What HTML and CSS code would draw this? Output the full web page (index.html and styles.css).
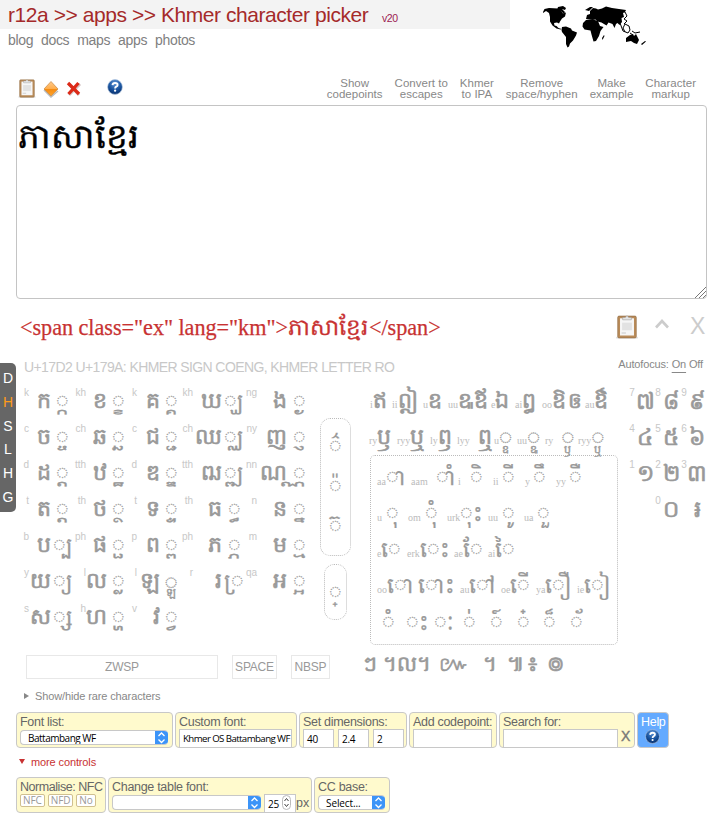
FILE: index.html
```
<!DOCTYPE html>
<html lang="en">
<head>
<meta charset="utf-8">
<title>Khmer character picker</title>
<link rel="stylesheet" href="styles.css">
</head>
<body>
<svg width="0" height="0" class="defs" aria-hidden="true">
  <defs>
    <linearGradient id="gold" x1="0" y1="0" x2="0" y2="1"><stop offset="0" stop-color="#ffc98a"/><stop offset=".5" stop-color="#ffae4c"/><stop offset=".52" stop-color="#f58a10"/><stop offset="1" stop-color="#ffa52e"/></linearGradient>
    <radialGradient id="ball" cx=".5" cy=".25" r=".75"><stop offset="0" stop-color="#5c93d6"/><stop offset=".6" stop-color="#17519c"/><stop offset="1" stop-color="#082f6c"/></radialGradient>
    <symbol id="clip" viewBox="0 0 20 22"><rect x="0" y="20" width="20" height="1.6" rx=".8" fill="#ddd"/><rect x="1.500" y="1" width="17" height="20" rx="1.2" fill="#b98b59" stroke="#906b43" stroke-width=".6"/><rect x="3.600" y="3" width="12.800" height="15.8" fill="#f6f6f6"/><path d="M5.5 7h9v7h-9z" fill="#e2e2e2"/><path d="M5 16.5h4" stroke="#ccc"/><path d="M6 4.4V2.2h2.5Q10-.6 11.500 2.200H14v2.200z" fill="#e4e4e4" stroke="#999" stroke-width=".5"/></symbol>
    <symbol id="help" viewBox="0 0 16 16"><circle cx="8" cy="8" r="7.400" fill="url(#ball)" stroke="#b8cbe3" stroke-width=".7"/><path d="M5.500 6.200Q5.700 4 8.100 4q2.500 0 2.500 1.900 0 1.100-1.400 1.800Q8.100 8.300 8.100 9.500" fill="none" stroke="#fff" stroke-width="1.900"/><circle cx="8.100" cy="11.700" r="1.150" fill="#fff"/></symbol>
  </defs>
</svg>

<header class="top">
  <div class="title"><span class="crumbs">r12a &gt;&gt; apps &gt;&gt; Khmer character picker</span><span class="version">v20</span></div>
  <svg class="map" viewBox="0 0 104 44" width="104" height="44">
    <path d="M0 6l1.500-3L6 2l9 .5 3 2 2 3 3-1-1 4-3 2-2 3-1 2-2-1-3 .5.500 2.500 2 .5 2 2 3 1-1 .5-4-1-4-3-2.500-4L7 11l-1-4-3-2-3 2z"/>
    <path d="M15 1l5-1 3 2-1 2-3-1 3 3-1 2-3-3-4-1z"/>
    <path d="M19 21l4-.5 5 2 1 2 5 2-1 3-3 5-3 3-1 3-1.500 1L23 38l0-7-4-5-.5-2z"/>
    <path d="M40 17l3-3 7-.5 5 1.500 2 5 3.500 1-3 4-1.500 5-3 5-2.500.5-2-7-1-4-6-1-2-3z"/>
    <path d="M43 13l1-4 3-1 0-3 3-3 3 .5 2 1 4-1 4-2 6 1.500 7 1 7 1-1 2-2 1 1 4-2.500 1 .5 4-2.500 3-2-2-1.500 1-1.500 4-2-4-4-1.500-2 3-5-3-4-1-2-2-3 .5z"/>
    <path d="M42 4l5-3 3 0-4 4zM59 32l2-3 .5 1-2 4z"/>
    <path d="M78 5l4 1 2 4-3 3 3 2-3 3M77 17l3 8 5 2 2-3-1-4-4-2-2 4 2 4M89 25l3 2 5-1M90 29l-3-2" fill="none" stroke="#000" stroke-width="1"/>
    <path d="M83 32l4-3 3-1 1 2 2-2 2 4 1 2-2 4-3-1-3-2-5 1zM98 38l4-3 1 .5-4 3.500z"/>
  </svg>
</header>
<nav class="links"><a>blog</a><a>docs</a><a>maps</a><a>apps</a><a>photos</a></nav>

<div class="toolbar">
  <div class="tools">
    <svg width="18" height="19"><use href="#clip"/></svg>
    <svg width="18" height="18" viewBox="0 0 18 18"><path d="M2 10l7 7 7-6" fill="none" stroke="#bbb" stroke-width="1.500"/><path d="M9 1.500L16 9l-7 7L2 9z" fill="url(#gold)" stroke="#c9863e" stroke-width=".7"/></svg>
    <svg width="16" height="17" viewBox="0 0 16 17"><path d="M3 4l10 11M14 4L3 15" stroke="#d5c5c5" stroke-width="3"/><path d="M2 3l11 11M12.500 3l-10 11" stroke="#dc2a18" stroke-width="3.300"/></svg>
    <svg class="help-sm" width="16" height="16"><use href="#help"/></svg>
  </div>
  <div class="actions">
    <span>Show<br>codepoints</span><span>Convert to<br>escapes</span><span>Khmer<br>to IPA</span><span>Remove<br>space/hyphen</span><span>Make<br>example</span><span>Character<br>markup</span>
  </div>
</div>

<main>
<div class="editor" lang="km">ភាសាខ្មែរ<svg class="grip" width="12" height="12"><path d="M1 12L12 1M5 12l7-7M9 12l3-3" stroke="#777" fill="none"/></svg></div>

<div class="markup">
  <div class="code">&lt;span class="ex" lang="km"&gt;<span class="km" lang="km">ភាសាខ្មែរ</span>&lt;/span&gt;</div>
  <div class="code-tools">
    <svg width="22" height="24"><use href="#clip"/></svg>
    <svg class="caret" width="14" height="10"><path d="M1 8.500L7 2l6 6.500" fill="none" stroke="#ccc" stroke-width="2.600"/></svg>
    <span class="close">X</span>
  </div>
</div>

<div class="info"><span class="name">U+17D2 U+179A: KHMER SIGN COENG, KHMER LETTER RO</span><span class="focus">Autofocus: <u>On</u> Off</span></div>

<section class="picker">
  <div class="left">
    <div class="cons" lang="km">
      <i>k</i><b>ក</b><s>◌្ក</s><i>kh</i><b>ខ</b><s>◌្ខ</s><i>k</i><b>គ</b><s>◌្គ</s><i>kh</i><b>ឃ</b><s>◌្ឃ</s><i>ng</i><b>ង</b><s>◌្ង</s>
      <i>c</i><b>ច</b><s>◌្ច</s><i>ch</i><b>ឆ</b><s>◌្ឆ</s><i>c</i><b>ជ</b><s>◌្ជ</s><i>ch</i><b>ឈ</b><s>◌្ឈ</s><i>ny</i><b>ញ</b><s>◌្ញ</s>
      <i>d</i><b>ដ</b><s>◌្ដ</s><i>tth</i><b>ឋ</b><s>◌្ឋ</s><i>d</i><b>ឌ</b><s>◌្ឌ</s><i>tth</i><b>ឍ</b><s>◌្ឍ</s><i>nn</i><b>ណ</b><s>◌្ណ</s>
      <i>t</i><b>ត</b><s>◌្ត</s><i>th</i><b>ថ</b><s>◌្ថ</s><i>t</i><b>ទ</b><s>◌្ទ</s><i>th</i><b>ធ</b><s>◌្ធ</s><i>n</i><b>ន</b><s>◌្ន</s>
      <i>b</i><b>ប</b><s>◌្ប</s><i>ph</i><b>ផ</b><s>◌្ផ</s><i>p</i><b>ព</b><s>◌្ព</s><i>ph</i><b>ភ</b><s>◌្ភ</s><i>m</i><b>ម</b><s>◌្ម</s>
      <i>y</i><b>យ</b><s>◌្យ</s><i>l</i><b>ល</b><s>◌្ល</s><i>l</i><b>ឡ</b><s class="stack">◌<small>ឡ</small></s><i>r</i><b>រ</b><s>◌្រ</s><i>qa</i><b>អ</b><s>◌្អ</s>
      <i>s</i><b>ស</b><s>◌្ស</s><i>h</i><b>ហ</b><s>◌្ហ</s><i>v</i><b>វ</b><s>◌្វ</s>
    </div>
    <div class="spaces"><span class="zwsp">ZWSP</span><span class="sp">SPACE</span><span class="nb">NBSP</span></div>
  </div>
  <div class="signs" lang="km">
    <div class="shifters"><s>◌៌</s><s>◌៉</s><s>◌៊</s></div>
    <div class="coeng"><s>◌្</s></div>
  </div>
  <div class="middle" lang="km">
    <div class="row ind1"><span><i>i</i>ឥ</span><span><i>ii</i>ឦ</span><span><i>u</i>ឧ</span><span><i>uu</i>ឩ</span><span>ឪ</span><span><i>e</i>ឯ</span><span><i>ai</i>ឰ</span><span><i>oo</i>ឱ</span><span>ឲ</span><span><i>au</i>ឳ</span></div>
    <div class="row ind2"><span><i>ry</i>ឫ</span><span><i>ryy</i>ឬ</span><span><i>ly</i>ឭ</span><span class="wide"><i>lyy</i>ឮ</span><span><i>u</i><s class="stack">◌<small>ឧ</small></s></span><span><i>uu</i><s class="stack">◌<small>ឩ</small></s></span><span class="wide"><i>ry</i><s class="stack">◌<small>ឫ</small></s></span><span><i>ryy</i><s class="stack">◌<small>ឬ</small></s></span></div>
    <div class="vowels">
      <div class="row v1"><span><i>aa</i><s>◌ា</s></span><span class="wide"><i>aam</i><s>◌ាំ</s></span><span class="far"><i>i</i><s>◌ិ</s></span><span><i>ii</i><s>◌ី</s></span><span><i>y</i><s>◌ឹ</s></span><span><i>yy</i><s>◌ឺ</s></span></div>
      <div class="row v2"><span><i>u</i><s>◌ុ</s></span><span><i>om</i><s>◌ុំ</s></span><span><i>urk</i><s>◌ុះ</s></span><span><i>uu</i><s>◌ូ</s></span><span><i>ua</i><s>◌ួ</s></span></div>
      <div class="row v3"><span><i>e</i><s>◌េ</s></span><span><i>erk</i><s>◌េះ</s></span><span><i>ae</i><s>◌ែ</s></span><span><i>ai</i><s>◌ៃ</s></span></div>
      <div class="row v4"><span><i>oo</i><s>◌ោ</s></span><span><s>◌ោះ</s></span><span><i>au</i><s>◌ៅ</s></span><span><i>oe</i><s>◌ើ</s></span><span><i>ya</i><s>◌ឿ</s></span><span><i>ie</i><s>◌ៀ</s></span></div>
      <div class="row v5"><s>◌ំ</s><s>◌ះ</s><s>◌ៈ</s><s>◌់</s><s>◌៍</s><s>◌៎</s><s>◌៏</s><s>◌័</s></div>
    </div>
    <div class="row punct"><span>ៗ</span><span>។ល។</span><span>៚</span><span>។</span><span>៕</span><span>៖</span><span>៙</span></div>
  </div>
  <div class="digits" lang="km">
    <i>7</i><b>៧</b><i>8</i><b>៨</b><i>9</i><b>៩</b>
    <i>4</i><b>៤</b><i>5</i><b>៥</b><i>6</i><b>៦</b>
    <i>1</i><b>១</b><i>2</i><b>២</b><i>3</i><b>៣</b>
    <i></i><b></b><i>0</i><b>០</b><i></i><b>៛</b>
  </div>
</section>

<div class="rare"><span class="tri-r"></span>Show/hide rare characters</div>

<div class="controls">
  <div class="panel p-font"><label>Font list:</label><div class="select"><span>Battambang WF</span><svg width="13" height="15"><path d="M3.500 6L6.500 3l3 3M3.500 9.500l3 3 3-3" fill="none" stroke="#fff" stroke-width="1.300"/></svg></div></div>
  <div class="panel p-custom"><label>Custom font:</label><div class="field">Khmer OS Battambang WF</div></div>
  <div class="panel p-dim"><label>Set dimensions:</label><div class="trio"><div class="field">40</div><div class="field">2.4</div><div class="field">2</div></div></div>
  <div class="panel p-add"><label>Add codepoint:</label><div class="field"></div></div>
  <div class="panel p-search"><label>Search for:</label><div class="duo"><div class="field"></div><span class="x">X</span></div></div>
  <div class="panel p-help"><label>Help</label><svg width="15" height="15"><use href="#help"/></svg></div>
</div>
<div class="more"><span class="tri-d"></span>more controls</div>
<div class="controls second">
  <div class="panel p-norm"><label>Normalise: NFC</label><div class="buttons"><span>NFC</span><span>NFD</span><span>No</span></div></div>
  <div class="panel p-table"><label>Change table font:</label><div class="duo"><div class="select"><span></span><svg width="13" height="15"><path d="M3.500 6L6.500 3l3 3M3.500 9.500l3 3 3-3" fill="none" stroke="#fff" stroke-width="1.300"/></svg></div><div class="field num">25<svg width="9" height="15"><rect x=".5" y=".5" width="8" height="14" rx="4" fill="#fff" stroke="#bbb"/><path d="M2.500 6l2-2.500 2 2.500M2.500 9l2 2.500 2-2.500" fill="none" stroke="#444"/></svg></div><span class="px">px</span></div></div>
  <div class="panel p-cc"><label>CC base:</label><div class="select"><span>Select...</span><svg width="13" height="15"><path d="M3.500 6L6.500 3l3 3M3.500 9.500l3 3 3-3" fill="none" stroke="#fff" stroke-width="1.300"/></svg></div></div>
</div>
</main>
<aside class="side"><span>D</span><span class="on">H</span><span>S</span><span>L</span><span>H</span><span>G</span></aside>
</body>
</html>
```
FILE: styles.css
```
* { box-sizing: border-box; }
body { margin: 0; width: 713px; height: 819px; overflow: hidden; position: relative; background: #fff; color: #888; font-family: "Liberation Sans", Arial, sans-serif; }
.defs { position: absolute; }
i, b, s { font-style: normal; font-weight: normal; text-decoration: none; }

.top { display: flex; height: 49px; margin-bottom: -16px; }
.title { width: 510px; height: 29px; padding-left: 8px; background: #f3f3f3; color: #a52a2a; display: flex; align-items: baseline; line-height: 29px; white-space: nowrap; }
.crumbs { font-size: 21px; letter-spacing: -.44px; width: 374px; }
.version { font-size: 10.500px; letter-spacing: -.4px; color: #9c2050; }
.map { margin: 6px 0 0 33px; }
.links { display: flex; gap: 8px; padding-left: 8px; height: 42px; font-size: 14px; line-height: 15px; letter-spacing: -.35px; color: #808080; }

.toolbar { display: flex; justify-content: space-between; height: 30px; padding: 0 17px 0 18px; }
.tools { display: flex; gap: 6px; align-items: center; height: 28px; }
.tools svg { margin-top: -1px; }
.tools .help-sm { margin: -4px 0 0 19px; }
.actions { display: flex; gap: 12px; padding-top: 3px; text-align: center; font-size: 11.500px; line-height: 11px; white-space: nowrap; letter-spacing: .02px; }

main { padding-left: 16px; }
.editor { position: relative; width: 691px; height: 194px; border: 1px solid #c4c4c4; border-radius: 4px; padding: 4px 1px; color: #000; font-size: 34.200px; line-height: 52px; -webkit-text-stroke: .4px #000; }
.grip { position: absolute; right: 0; bottom: 0; }
.markup { display: flex; justify-content: space-between; height: 56px; padding: 12px 9px 0 4px; color: #c83232; }
.code { display: flex; font-family: "Liberation Serif", serif; font-size: 22.300px; line-height: 34px; letter-spacing: -.02px; white-space: nowrap; -webkit-text-stroke: .25px #c83232; }
.code .km { font-size: 23px; width: 81px; letter-spacing: 0; }
.code { font-size: 22.200px; word-spacing: -.1px; }
.code-tools { display: flex; align-items: center; height: 31px; margin-right: 3px; }
.caret { margin: -5px 18px 0 17px; }
.close { color: #ccc; font-size: 23px; width: 18px; text-align: center; padding-left: 3px; }
.markup .close { margin-right: -4px; }
.info { display: flex; justify-content: space-between; padding: 0 10px 0 8px; height: 28px; line-height: 24px; }
.name { font-size: 14px; letter-spacing: -.6px; color: #c8c8c8; }
.focus { font-size: 11px; line-height: 19px; letter-spacing: -.15px; }
.focus u { text-underline-offset: 4px; }

.picker { display: flex; height: 302px; color: #999; white-space: nowrap; -webkit-text-stroke: .25px #999; }
.picker i, .spaces { -webkit-text-stroke: 0; }
.left { width: 298px; flex: none; }
.cons { display: grid; grid-template-columns: 13px 22px 23px 12px 21px 23px 7px 23px 22px 11px 29px 24px 11px 30px 24px; grid-auto-rows: 36px; height: 272px; }
.cons i, .digits i { font-family: "Liberation Sans", sans-serif; font-size: 10px; line-height: 12px; color: #c8c8c8; padding-top: 4px; display: flex; justify-content: flex-end; }
.cons b, .cons s { display: flex; justify-content: flex-end; font-size: 22px; line-height: 36px; }
.picker b, .ind1, .ind2, .punct { -webkit-text-stroke: .6px #999; }
.ind2 s { -webkit-text-stroke: .25px #999; }
.cons s { justify-content: center; padding-top: 1px; }
.stack { position: relative; }
.stack small { position: absolute; left: 50%; top: 22px; transform: translateX(-50%); font-size: 11px; line-height: 14px; -webkit-text-stroke: .4px #999; }
.ind2 .stack small { top: 23px; }
.spaces { display: flex; padding-left: 10px; font-size: 12px; letter-spacing: -.2px; }
.spaces span { flex: none; height: 24px; border: 1px solid #e8e8e8; text-align: center; line-height: 22px; }
.spaces .zwsp { width: 192px; }
.spaces .sp { width: 45px; margin: 0 14px; }
.spaces .nb { width: 39px; }
.signs { width: 43px; flex: none; padding-top: 35px; display: flex; flex-direction: column; align-items: center; }
.shifters, .coeng { border: 1px dotted #bbb; border-radius: 10px; display: grid; justify-items: center; font-size: 22px; }
.shifters { width: 31px; height: 138px; padding-top: 8px; grid-auto-rows: 40px; line-height: 40px; }
.coeng { width: 23px; height: 56px; margin-top: 8px; line-height: 55px; }

.middle { width: 269px; flex: none; padding-left: 10px; }
.row { display: grid; height: 36px; line-height: 36px; font-size: 22px; }
.row span { display: flex; align-items: baseline; }
.row i { font-family: "Liberation Serif", serif; font-size: 10px; color: #bbb; }
.row .wide i { margin-right: 8px; }
.row .far i { margin-right: 9px; }
.ind1 { padding-left: 3px; grid-template-columns: 22px 31px 25px 26px 17px 24px 27px 26px 17px 24px; }
.ind2 { padding-left: 2px; grid-template-columns: 28px 33px 27px 37px 23px 28px 33px 30px; }
.vowels { width: 248px; height: 190px; margin: 0 0 0 3px; border: 1px dotted #bbb; border-radius: 5px; padding: 4px 6px; }
.v1 { grid-template-columns: 34px 47px 35px 32px 31px 30px; }
.v1 span:nth-child(n+4) i { margin-right: 3px; }
.v2 { grid-template-columns: 31px 39px 41px 36px 40px; }
.v2 span:not(:nth-child(3)) i { margin-right: 4px; }
.v3 { grid-template-columns: 30px 47px 34px 30px; }
.v4 { grid-template-columns: 41px 42px 41px 35px 41px 34px; }
.v5 { grid-template-columns: 24px 28px 29px 27px 27px 26px 27px 26px; padding: 1px 0 0 5px; }
.punct { width: 200px; margin: 1px 0 0 -4px; grid-template-columns: 20px 56px 44px 24px 21px 19px 14px; font-size: 21px; }
.digits { flex: none; display: grid; grid-template-columns: 12px 14px 12px 14px 12px 14px; grid-auto-rows: 36px; }
.digits b { font-size: 23px; line-height: 36px; display: flex; justify-content: center; }
.digits i { justify-content: center; }

.rare, .more { display: flex; align-items: center; font-size: 11px; letter-spacing: -.12px; }
.rare { height: 22px; padding-left: 8px; margin-bottom: 1px; }
.tri-r { border: solid transparent; border-width: 3px 0 3px 5px; border-left-color: #888; margin-right: 6px; }
.tri-d { border: solid transparent; border-width: 5px 3px 0; border-top-color: #c83232; margin-right: 6px; }
.more { height: 27px; margin-bottom: 1px; padding-left: 3px; color: #c83232; }
.controls { display: flex; gap: 2px; padding-top: 4px; }
.second { padding-top: 1px; }
.panel { flex: none; height: 36px; border: 1px solid #c8c8c8; border-radius: 4px; background: #fffacd; padding: 2px 4px 0 3px; color: #666; overflow: hidden; }
.panel label { display: block; font-size: 12.500px; line-height: 14px; letter-spacing: -.3px; white-space: nowrap; }
.p-norm label { letter-spacing: -.45px; }
.field { height: 19px; border: 1px solid #c8c8c8; background: #fff; color: #000; font-size: 10px; line-height: 18px; padding-left: 3px; font-family: "Open Sans", sans-serif; white-space: nowrap; overflow: hidden; letter-spacing: -.3px; }
.p-custom .field { font-size: 9.700px; letter-spacing: -.6px; }
.select { flex: none; display: flex; justify-content: space-between; height: 15px; margin-top: 1px; border: 1px solid #c8c8c8; border-right: 0; border-radius: 4px; background: #fff; color: #000; font: 10px/14px "Open Sans", sans-serif; letter-spacing: -.5px; overflow: hidden; padding-left: 7px; }
.p-cc .select { letter-spacing: -.1px; }
.select svg { background: #3c94f8; margin-top: -1px; flex: none; }
.p-font { width: 157px; }
.p-custom { width: 122px; }
.p-dim { width: 108px; }
.trio { display: flex; gap: 4px; }
.trio .field { width: 31px; flex: none; }
.p-add { width: 88px; }
.p-search { width: 136px; }
.duo { display: flex; }
.p-search .field { width: 115px; flex: none; }
.x { font-size: 14px; margin-left: 3px; margin-top: -1px; color: #777; -webkit-text-stroke: .4px #777; }
.p-help { width: 32px; background: #64aaff; color: #fff; text-align: center; }
.p-help svg { display: block; margin: 0 0 0 4px; }
.p-norm { width: 90px; }
.buttons { display: flex; gap: 3px; }
.buttons span { border: 1px solid #d0c090; border-radius: 2px; background: #fff; font-size: 10px; line-height: 11px; height: 13px; padding: 0 2px; color: #999; font-family: "Open Sans", sans-serif; letter-spacing: -.1px; }
.p-table { width: 204px; }
.p-table .select { width: 149px; }
.p-table .num { width: 32px; flex: none; margin-left: 3px; display: flex; justify-content: space-between; padding-right: 4px; }
.p-cc { width: 76px; }
.px { font-size: 12.500px; line-height: 18px; }

.side { position: absolute; left: 0; top: 363px; width: 16px; height: 149px; background: #666; color: #fff; border-radius: 0 5px 5px 0; display: flex; flex-direction: column; padding-top: 3px; font-size: 14px; line-height: 24px; text-align: center; }
.side span { height: 23.800px; }
.side .on { color: #ff9c1a; }
```
